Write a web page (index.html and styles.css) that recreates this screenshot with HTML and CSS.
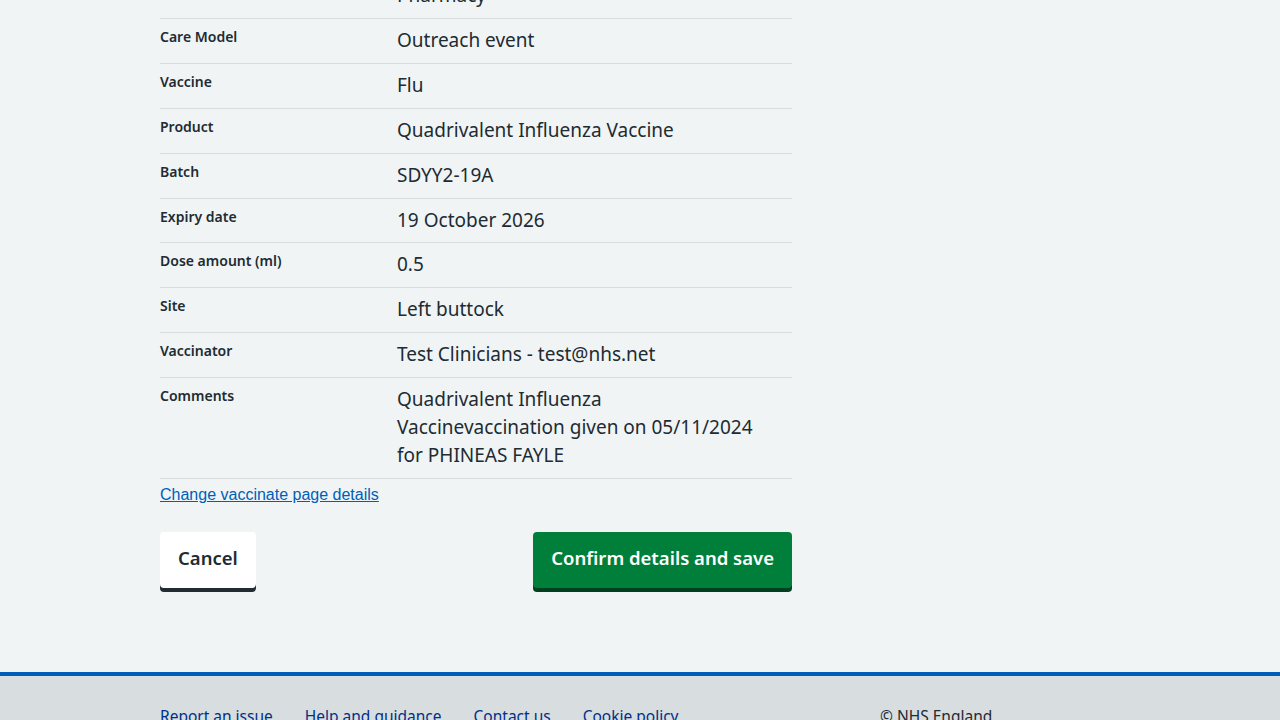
FILE: index.html
```html
<!DOCTYPE html>
<html lang="en">
<head>
<meta charset="utf-8">
<title>Check and confirm</title>
<link rel="stylesheet" href="styles.css">
</head>
<body>
<main class="page">
  <div class="content">
    <dl class="summary">
      <div class="row"><dt class="key">Location</dt><dd class="value">Pharmacy</dd></div>
      <div class="row"><dt class="key">Care Model</dt><dd class="value">Outreach event</dd></div>
      <div class="row"><dt class="key">Vaccine</dt><dd class="value">Flu</dd></div>
      <div class="row"><dt class="key">Product</dt><dd class="value">Quadrivalent Influenza Vaccine</dd></div>
      <div class="row"><dt class="key">Batch</dt><dd class="value">SDYY2-19A</dd></div>
      <div class="row"><dt class="key">Expiry date</dt><dd class="value">19 October 2026</dd></div>
      <div class="row"><dt class="key">Dose amount (ml)</dt><dd class="value">0.5</dd></div>
      <div class="row"><dt class="key">Site</dt><dd class="value">Left buttock</dd></div>
      <div class="row"><dt class="key">Vaccinator</dt><dd class="value">Test Clinicians - test@nhs.net</dd></div>
      <div class="row"><dt class="key">Comments</dt><dd class="value">Quadrivalent Influenza Vaccinevaccination given on 05/11/2024 for PHINEAS FAYLE</dd></div>
    </dl>
    <p class="change"><a href="#" class="change-link">Change vaccinate page details</a></p>
    <div class="actions">
      <button class="btn btn-secondary" type="button">Cancel</button>
      <button class="btn btn-primary" type="button">Confirm details and save</button>
    </div>
  </div>
</main>
<footer class="footer">
  <div class="footer-inner">
    <ul class="footer-links">
      <li><a href="#">Report an issue</a></li>
      <li><a href="#">Help and guidance</a></li>
      <li><a href="#">Contact us</a></li>
      <li><a href="#">Cookie policy</a></li>
    </ul>
    <p class="copyright">© NHS England</p>
  </div>
</footer>
</body>
</html>
```

FILE: styles.css
```css
* { box-sizing: border-box; }

html, body {
  margin: 0;
  padding: 0;
  background: #f0f4f5;
  color: #212b32;
  font-family: "Noto Sans", Lato, sans-serif;
}

.page {
  width: 960px;
  margin: 0 auto;
  margin-top: -26px;
}

.content {
  width: 632px;
}

.summary {
  margin: 0;
  padding: 0;
}

.row {
  display: grid;
  grid-template-columns: 237px 1fr;
  border-bottom: 1px solid #d8dde0;
}

.key {
  margin: 0;
  padding: 6px 16px 8px 0;
  font-size: 14px;
  font-weight: 600;
  line-height: 24px;
}

.value {
  margin: 0;
  padding: 8px 30px 8px 0;
  font-size: 19px;
  line-height: 27.9px;
}

.change {
  margin: 0;
  padding-top: 7px;
  font-family: "Liberation Sans", Arial, sans-serif;
  font-size: 16px;
}

.change-link {
  color: #005eb8;
  text-decoration: underline;
}

.actions {
  display: flex;
  justify-content: space-between;
  align-items: flex-start;
  margin-top: 28px;
  margin-bottom: 84px;
}

.btn {
  font-family: "Noto Sans", Lato, sans-serif;
  font-size: 18.5px;
  font-weight: 600;
  line-height: 28px;
  padding: 10px 16px 14px;
  border: 2px solid transparent;
  border-radius: 4px;
  cursor: pointer;
}

.btn-secondary {
  background: #ffffff;
  color: #212b32;
  box-shadow: 0 4px 0 #212b32;
}

.btn-primary {
  background: #007f3b;
  color: #ffffff;
  box-shadow: 0 4px 0 #00401e;
}

.footer {
  background: #d8dde0;
  border-top: 4px solid #005eb8;
  padding-top: 28px;
  padding-bottom: 32px;
}

.footer-inner {
  width: 960px;
  margin: 0 auto;
  display: flex;
}

.footer-links {
  list-style: none;
  margin: 0;
  padding: 0;
  width: 720px;
  display: flex;
  gap: 32px;
}

.footer-links a {
  color: #003087;
  font-size: 15.5px;
  line-height: 24px;
  text-decoration: none;
}

.copyright {
  margin: 0;
  font-size: 15.5px;
  line-height: 24px;
  color: #212b32;
}
```
